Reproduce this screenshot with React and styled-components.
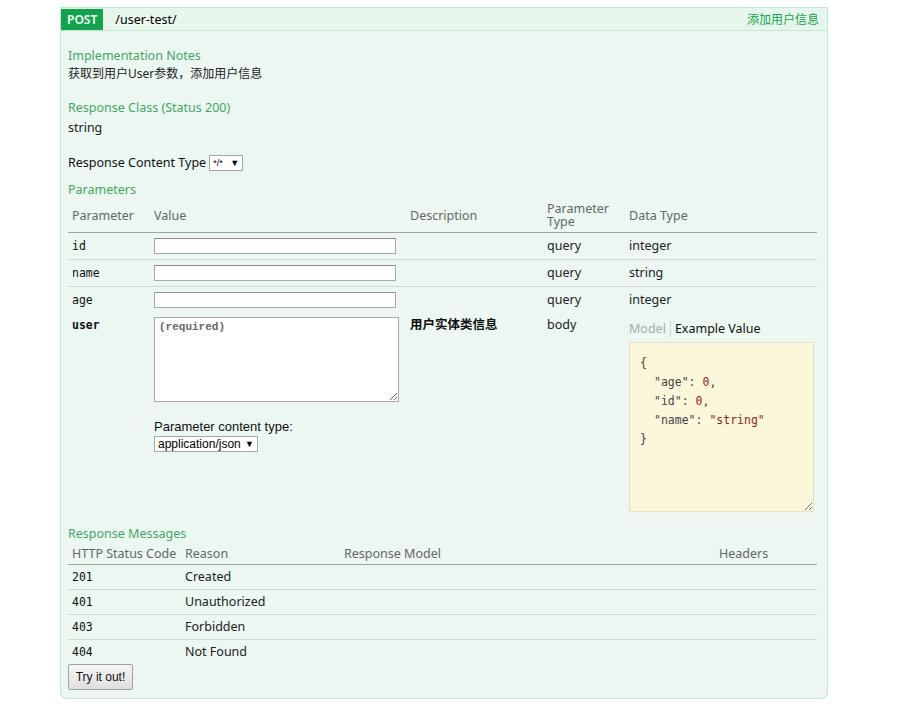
import React from 'react';
import styled, { createGlobalStyle } from 'styled-components';

const GREEN = '#10a54a';
const TITLE_GREEN = '#3fa865';

const GlobalStyle = createGlobalStyle`
  body {
    margin: 0;
    background: #fff;
    font-family: "Noto Sans", "Open Sans", "Noto Sans CJK SC", sans-serif;
    font-size: 12.5px;
    color: #333;
  }
`;

const Page = styled.div`
  padding: 7px 0 20px 60px;
`;

const Operation = styled.div`
  width: 766px;
  border: 1px solid #c3e8d1;
  border-radius: 0 0 6px 6px;
  background: #ebf7f0;
`;

const Heading = styled.div`
  display: flex;
  align-items: center;
  height: 22px;
  background: #e7f6ec;
  border-bottom: 1px solid #c3e8d1;
`;

const Method = styled.span`
  display: flex;
  align-items: center;
  height: 21px;
  padding: 0 6px;
  background: ${GREEN};
  color: #fff;
  font-size: 12px;
  font-weight: 600;
`;

const Path = styled.span`
  margin-left: 12px;
  color: #000;
  font-size: 12.5px;
`;

const Summary = styled.span`
  margin-left: auto;
  padding-right: 8px;
  color: ${GREEN};
  font-size: 12px;
`;

const Content = styled.div`
  padding: 16px 10px 8px 7px;
  line-height: 18px;
`;

const Title = styled.h4`
  margin: ${(p) => p.$top || 0}px 0 0;
  font-size: 12.5px;
  font-weight: normal;
  line-height: 18px;
  color: ${TITLE_GREEN};
`;

const Para = styled.div`
  margin-top: ${(p) => p.$top || 0}px;
  font-size: ${(p) => p.$size || 12.5}px;
  color: #222;
`;

const ContentTypeRow = styled.div`
  display: flex;
  align-items: center;
  gap: 3px;
  margin-top: 17px;
  color: #111;
`;

const SelectBox = styled.span`
  display: inline-flex;
  align-items: center;
  justify-content: space-between;
  box-sizing: border-box;
  width: ${(p) => p.$width}px;
  height: 16px;
  padding: 0 3px;
  border: 1px solid #a6a6a6;
  background: #fff;
  color: #000;
  font-family: "Liberation Sans", Arial, sans-serif;
  font-size: ${(p) => p.$size || 12}px;
  line-height: 14px;
`;

const Arrow = styled.span`
  font-size: 9px;
`;

const Table = styled.table`
  width: 749px;
  border-collapse: collapse;
  table-layout: fixed;
`;

const Th = styled.th`
  width: ${(p) => p.$w}px;
  height: ${(p) => p.$h}px;
  box-sizing: border-box;
  padding: 0 4px;
  text-align: left;
  vertical-align: middle;
  white-space: nowrap;
  font-weight: normal;
  font-size: 12.5px;
  line-height: 13px;
  color: #666;
  border-bottom: 1px solid #9aa59f;
`;

const Tr = styled.tr`
  height: ${(p) => p.$h}px;
  & + & td {
    border-top: 1px solid #cfd8d3;
  }
`;

const Td = styled.td`
  padding: ${(p) => p.$pad || '0 4px'};
  vertical-align: ${(p) => p.$valign || 'middle'};
  font-size: 12.5px;
  line-height: 18px;
  color: ${(p) => p.$color || '#222'};
`;

const Code = styled.span`
  font-family: "DejaVu Sans Mono", "Liberation Mono", monospace;
  font-size: 11.5px;
  font-weight: ${(p) => (p.$bold ? 'bold' : 'normal')};
  color: #111;
`;

const TextInput = styled.input`
  display: block;
  box-sizing: border-box;
  width: 242px;
  height: 16px;
  margin: 0;
  border: 1px solid #a9a9a9;
  border-top-color: #8e8e8e;
  background: #fff;
`;

const BodyArea = styled.textarea`
  display: block;
  box-sizing: border-box;
  width: 245px;
  height: 85px;
  margin: 4px 0 0;
  padding: 3px 4px;
  border: 1px solid #a9a9a9;
  background: #fff;
  font-family: "Liberation Mono", monospace;
  font-size: 11px;
  font-weight: bold;
  &::placeholder {
    color: #666;
  }
`;

const ContentTypeLabel = styled.div`
  margin-top: 17px;
  font-family: "Liberation Sans", Arial, sans-serif;
  font-size: 13px;
  line-height: 16px;
  color: #111;
`;

const Tabs = styled.div`
  display: flex;
  align-items: center;
  margin-top: 8px;
  line-height: 16px;
`;

const Tab = styled.span`
  padding-right: 4px;
  margin-right: 4px;
  color: ${(p) => (p.$active ? '#aaa' : '#111')};
  border-right: ${(p) => (p.$active ? '1px solid #ccd6d0' : 'none')};
`;

const Sample = styled.div`
  box-sizing: border-box;
  width: 185px;
  height: 170px;
  margin: 5px 0 0;
  padding: 11px 10px;
  background: #fcf6db;
  border: 1px solid #e5e0c6;
  font-family: "DejaVu Sans Mono", "Liberation Mono", monospace;
  font-size: 11.5px;
  line-height: 19px;
  color: #444;
  overflow: auto;
  resize: both;
`;

const JsonLine = styled.div`
  white-space: pre;
  padding-left: ${(p) => (p.$indent ? 14 : 0)}px;
`;

const Lit = styled.span`
  color: #8f1d1d;
`;

const TryButton = styled.button`
  display: block;
  width: 65px;
  height: 26px;
  padding: 0;
  border: 1px solid #a3a3a3;
  border-radius: 2px;
  background: linear-gradient(#f7f7f7, #dedede);
  font-family: "Liberation Sans", Arial, sans-serif;
  font-size: 12px;
  color: #111;
`;

const params = [
  { name: 'id', type: 'integer' },
  { name: 'name', type: 'string' },
  { name: 'age', type: 'integer' },
];

const responses = [
  ['201', 'Created'],
  ['401', 'Unauthorized'],
  ['403', 'Forbidden'],
  ['404', 'Not Found'],
];

export default function App() {
  return (
    <Page>
      <GlobalStyle />
      <Operation>
        <Heading>
          <Method>POST</Method>
          <Path>/user-test/</Path>
          <Summary>添加用户信息</Summary>
        </Heading>
        <Content>
          <Title>Implementation Notes</Title>
          <Para $size={12}>获取到用户User参数，添加用户信息</Para>

          <Title $top={16}>Response Class (Status 200)</Title>
          <Para $top={2}>string</Para>

          <ContentTypeRow>
            Response Content Type
            <SelectBox $width={34} $size={9}>
              */*<Arrow>▼</Arrow>
            </SelectBox>
          </ContentTypeRow>

          <Title $top={9}>Parameters</Title>
          <Table>
            <thead>
              <tr>
                <Th $w={82} $h={33}>Parameter</Th>
                <Th $w={256} $h={33}>Value</Th>
                <Th $w={137} $h={33}>Description</Th>
                <Th $w={82} $h={33}>Parameter<br />Type</Th>
                <Th $w={192} $h={33}>Data Type</Th>
              </tr>
            </thead>
            <tbody>
              {params.map((p) => (
                <Tr key={p.name} $h={27}>
                  <Td><Code>{p.name}</Code></Td>
                  <Td><TextInput type="text" /></Td>
                  <Td />
                  <Td>query</Td>
                  <Td>{p.type}</Td>
                </Tr>
              ))}
              <Tr $h={203}>
                <Td $valign="top" $pad="3px 4px"><Code $bold>user</Code></Td>
                <Td $valign="top" $pad="0 4px">
                  <BodyArea placeholder="(required)" />
                  <ContentTypeLabel>Parameter content type:</ContentTypeLabel>
                  <SelectBox $width={104} $size={12}>
                    application/json <Arrow>▼</Arrow>
                  </SelectBox>
                </Td>
                <Td $valign="top" $pad="3px 4px" $color="#111">
                  <b>用户实体类信息</b>
                </Td>
                <Td $valign="top" $pad="3px 4px">body</Td>
                <Td $valign="top" $pad="0 4px">
                  <Tabs>
                    <Tab $active>Model</Tab>
                    <Tab>Example Value</Tab>
                  </Tabs>
                  <Sample>
                    <JsonLine>{'{'}</JsonLine>
                    <JsonLine $indent>"age": <Lit>0</Lit>,</JsonLine>
                    <JsonLine $indent>"id": <Lit>0</Lit>,</JsonLine>
                    <JsonLine $indent>"name": <Lit>"string"</Lit></JsonLine>
                    <JsonLine>{'}'}</JsonLine>
                  </Sample>
                </Td>
              </Tr>
            </tbody>
          </Table>

          <Title $top={9}>Response Messages</Title>
          <Table>
            <thead>
              <tr>
                <Th $w={113} $h={21}>HTTP Status Code</Th>
                <Th $w={159} $h={21}>Reason</Th>
                <Th $w={375} $h={21}>Response Model</Th>
                <Th $w={102} $h={21}>Headers</Th>
              </tr>
            </thead>
            <tbody>
              {responses.map(([code, reason]) => (
                <Tr key={code} $h={25}>
                  <Td><Code>{code}</Code></Td>
                  <Td>{reason}</Td>
                  <Td />
                  <Td />
                </Tr>
              ))}
            </tbody>
          </Table>
          <TryButton>Try it out!</TryButton>
        </Content>
      </Operation>
    </Page>
  );
}
